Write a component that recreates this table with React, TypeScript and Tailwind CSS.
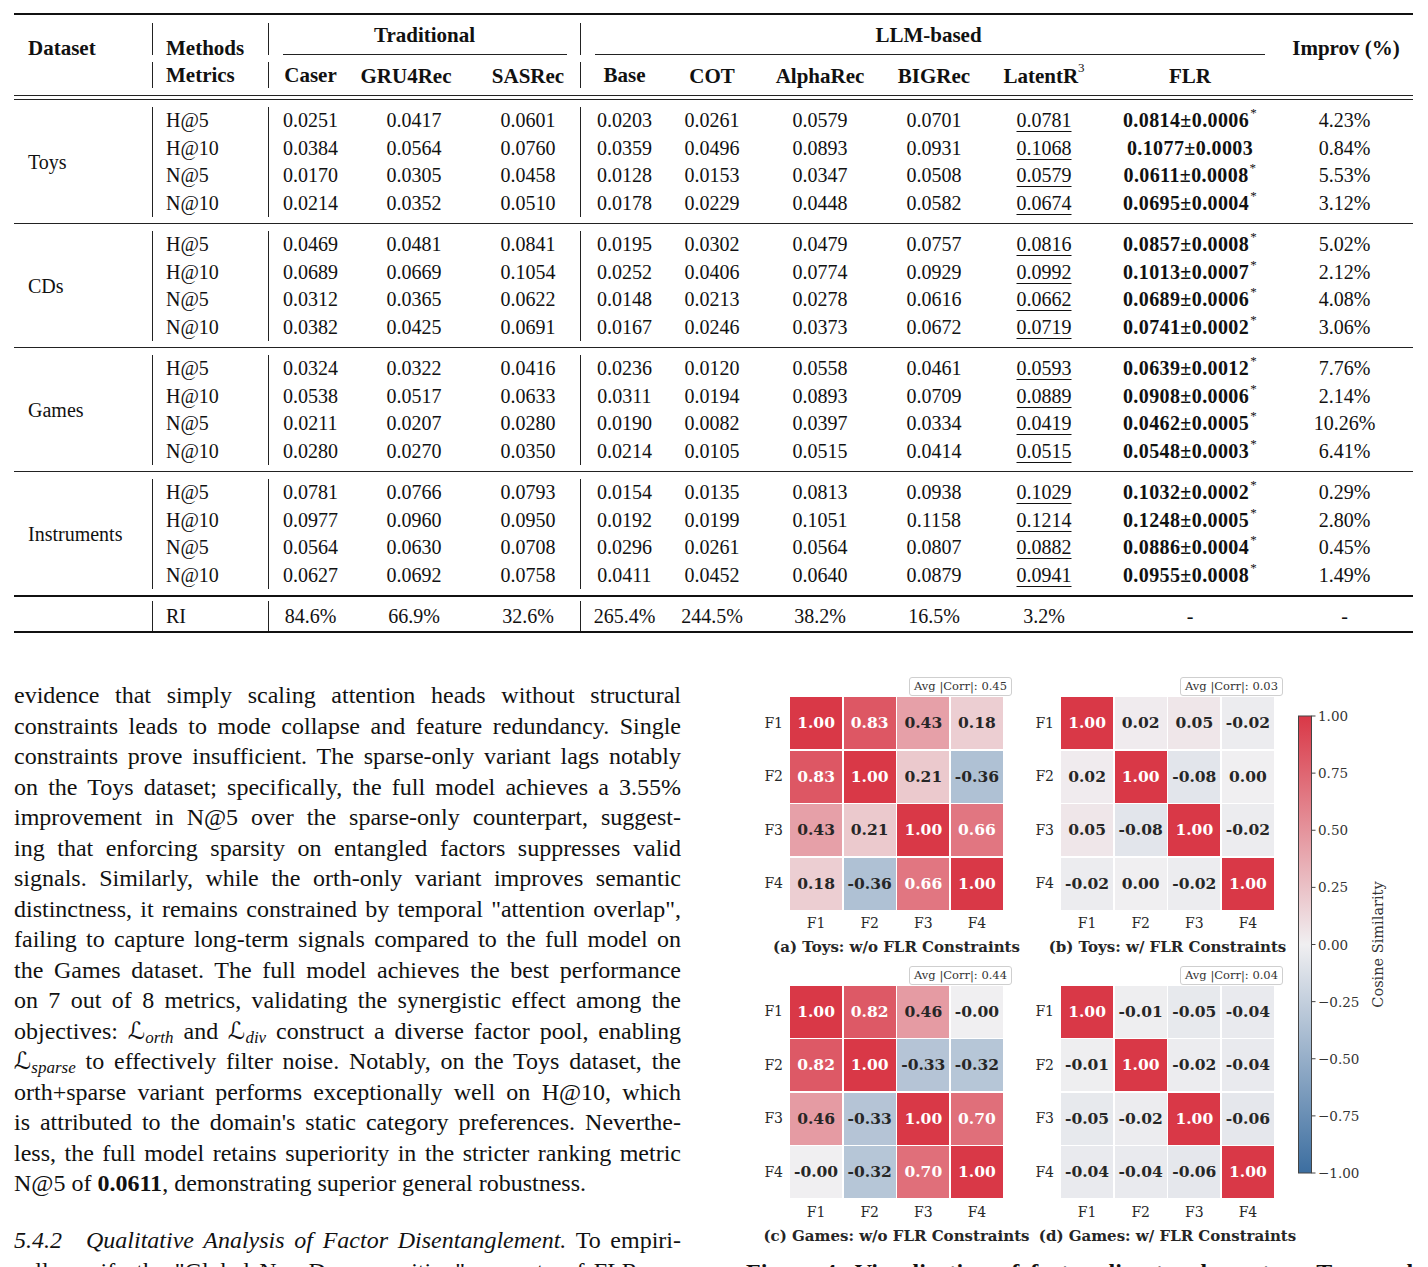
const COLS =
  'grid grid-cols-[138px_116px_84px_124px_104px_88px_88px_128px_100px_120px_172px_137px]'

const groups = [
  {
    name: 'Toys',
    rows: [
      ['H@5', '0.0251', '0.0417', '0.0601', '0.0203', '0.0261', '0.0579', '0.0701', '0.0781', '0.0814±0.0006*', '4.23%'],
      ['H@10', '0.0384', '0.0564', '0.0760', '0.0359', '0.0496', '0.0893', '0.0931', '0.1068', '0.1077±0.0003', '0.84%'],
      ['N@5', '0.0170', '0.0305', '0.0458', '0.0128', '0.0153', '0.0347', '0.0508', '0.0579', '0.0611±0.0008*', '5.53%'],
      ['N@10', '0.0214', '0.0352', '0.0510', '0.0178', '0.0229', '0.0448', '0.0582', '0.0674', '0.0695±0.0004*', '3.12%'],
    ],
  },
  {
    name: 'CDs',
    rows: [
      ['H@5', '0.0469', '0.0481', '0.0841', '0.0195', '0.0302', '0.0479', '0.0757', '0.0816', '0.0857±0.0008*', '5.02%'],
      ['H@10', '0.0689', '0.0669', '0.1054', '0.0252', '0.0406', '0.0774', '0.0929', '0.0992', '0.1013±0.0007*', '2.12%'],
      ['N@5', '0.0312', '0.0365', '0.0622', '0.0148', '0.0213', '0.0278', '0.0616', '0.0662', '0.0689±0.0006*', '4.08%'],
      ['N@10', '0.0382', '0.0425', '0.0691', '0.0167', '0.0246', '0.0373', '0.0672', '0.0719', '0.0741±0.0002*', '3.06%'],
    ],
  },
  {
    name: 'Games',
    rows: [
      ['H@5', '0.0324', '0.0322', '0.0416', '0.0236', '0.0120', '0.0558', '0.0461', '0.0593', '0.0639±0.0012*', '7.76%'],
      ['H@10', '0.0538', '0.0517', '0.0633', '0.0311', '0.0194', '0.0893', '0.0709', '0.0889', '0.0908±0.0006*', '2.14%'],
      ['N@5', '0.0211', '0.0207', '0.0280', '0.0190', '0.0082', '0.0397', '0.0334', '0.0419', '0.0462±0.0005*', '10.26%'],
      ['N@10', '0.0280', '0.0270', '0.0350', '0.0214', '0.0105', '0.0515', '0.0414', '0.0515', '0.0548±0.0003*', '6.41%'],
    ],
  },
  {
    name: 'Instruments',
    rows: [
      ['H@5', '0.0781', '0.0766', '0.0793', '0.0154', '0.0135', '0.0813', '0.0938', '0.1029', '0.1032±0.0002*', '0.29%'],
      ['H@10', '0.0977', '0.0960', '0.0950', '0.0192', '0.0199', '0.1051', '0.1158', '0.1214', '0.1248±0.0005*', '2.80%'],
      ['N@5', '0.0564', '0.0630', '0.0708', '0.0296', '0.0261', '0.0564', '0.0807', '0.0882', '0.0886±0.0004*', '0.45%'],
      ['N@10', '0.0627', '0.0692', '0.0758', '0.0411', '0.0452', '0.0640', '0.0879', '0.0941', '0.0955±0.0008*', '1.49%'],
    ],
  },
]

const riRow = ['RI', '84.6%', '66.9%', '32.6%', '265.4%', '244.5%', '38.2%', '16.5%', '3.2%', '-', '-']

// one class per value column: Caser .. Improv
const cellCls = [
  'border-l border-[#222] flex items-center justify-center',
  'flex items-center justify-center',
  'flex items-center justify-center',
  'border-l border-[#222] flex items-center justify-center',
  'flex items-center justify-center',
  'flex items-center justify-center',
  'flex items-center justify-center',
  'flex items-center justify-center underline underline-offset-[4px] decoration-1',
  'flex items-center justify-center font-bold tracking-[0.4px]',
  'flex items-center justify-center',
]

function FlrValue({ v }: { v: string }) {
  if (!v.endsWith('*')) return <>{v}</>
  return (
    <>
      {v.slice(0, -1)}
      <sup className="font-normal text-[13px] top-[-0.55em] ml-[1px]">*</sup>
    </>
  )
}

function Header() {
  return (
    <div className="border-t-2 border-[#111]">
      <div className={COLS + ' h-[45px] font-bold text-[21px]'}>
        <div className="pl-[14px] flex items-end">
          <span className="leading-[26px] mb-[-1px]">Dataset</span>
        </div>
        <div className="pt-[8px] pb-[5px]">
          <div className="h-full border-l border-[#222] pl-[13px] flex items-end">
            <span className="leading-[26px] mb-[-6px]">Methods</span>
          </div>
        </div>
        <div className="col-span-3 pt-[8px] pb-[5px]">
          <div className="h-full border-l border-[#222] flex flex-col">
            <div className="leading-[24px] text-center">Traditional</div>
            <div className="mt-[7px] ml-[14px] mr-[13px] h-px bg-[#222]" />
          </div>
        </div>
        <div className="col-span-6 pt-[8px] pb-[5px]">
          <div className="h-full border-l border-[#222] flex flex-col">
            <div className="leading-[24px] text-center">LLM-based</div>
            <div className="mt-[7px] ml-[14px] mr-[11px] h-px bg-[#222]" />
          </div>
        </div>
        <div className="flex items-end justify-center">
          <span className="leading-[26px] mb-[-1px] pl-[3px]">Improv (%)</span>
        </div>
      </div>
      <div className={COLS + ' h-[30px] font-bold text-[21px] leading-[26px]'}>
        <div />
        <div className="pt-[2px] pb-[3px]">
          <div className="h-full border-l border-[#222] pl-[13px] flex items-center">Metrics</div>
        </div>
        <div className="pt-[2px] pb-[3px]">
          <div className="h-full border-l border-[#222] flex items-center justify-center">Caser</div>
        </div>
        <div className="flex items-center justify-center pr-[16px]">GRU4Rec</div>
        <div className="flex items-center justify-center">SASRec</div>
        <div className="pt-[2px] pb-[3px]">
          <div className="h-full border-l border-[#222] flex items-center justify-center">Base</div>
        </div>
        <div className="flex items-center justify-center">COT</div>
        <div className="flex items-center justify-center">AlphaRec</div>
        <div className="flex items-center justify-center">BIGRec</div>
        <div className="flex items-center justify-center">
          <span>
            LatentR<sup className="text-[13px] font-normal top-[-0.8em]">3</sup>
          </span>
        </div>
        <div className="flex items-center justify-center">FLR</div>
        <div />
      </div>
      <div className="mt-[5px] h-[5px] border-y border-[#222]" />
    </div>
  )
}

function Group({ name, rows, first }: { name: string; rows: string[][]; first: boolean }) {
  return (
    <div className={first ? 'py-[6.5px]' : 'py-[6.5px] border-t border-[#222]'}>
      <div className={COLS + ' grid-rows-[repeat(4,27.5px)] text-[20px]'}>
        <div className="row-span-4 pl-[14px] flex items-center">{name}</div>
        {rows.map((r) => (
          <Row key={r[0]} r={r} />
        ))}
      </div>
    </div>
  )
}

function Row({ r }: { r: string[] }) {
  const [metric, ...rest] = r
  return (
    <>
      <div className="border-l border-[#222] pl-[13px] flex items-center">{metric}</div>
      {rest.map((v, i) => (
        <div key={i} className={cellCls[i]}>
          {i === 8 ? <FlrValue v={v} /> : v}
        </div>
      ))}
    </>
  )
}

function RiRow() {
  const [label, ...rest] = riRow
  return (
    <div className={COLS + ' h-[38px] border-t-2 border-b-2 border-[#111] text-[20px]'}>
      <div />
      <div className="py-[4px]">
        <div className="h-full border-l border-[#222] pl-[13px] flex items-center">{label}</div>
      </div>
      {rest.map((v, i) =>
        i === 0 || i === 3 ? (
          <div key={i} className="py-[4px]">
            <div className="h-full border-l border-[#222] flex items-center justify-center">{v}</div>
          </div>
        ) : (
          <div key={i} className="flex items-center justify-center">
            {v}
          </div>
        ),
      )}
    </div>
  )
}

const RED = [217, 56, 71]
const MID = [240, 239, 241]
const BLUE = [60, 110, 160]

function cellColor(s: string) {
  const v = parseFloat(s)
  const end = v >= 0 ? RED : BLUE
  const t = Math.min(Math.abs(v), 1)
  const c = MID.map((m, i) => Math.round(m + (end[i] - m) * t))
  return `rgb(${c.join(',')})`
}

const heatmaps = [
  {
    avg: '0.45',
    caption: '(a) Toys: w/o FLR Constraints',
    data: [
      ['1.00', '0.83', '0.43', '0.18'],
      ['0.83', '1.00', '0.21', '-0.36'],
      ['0.43', '0.21', '1.00', '0.66'],
      ['0.18', '-0.36', '0.66', '1.00'],
    ],
  },
  {
    avg: '0.03',
    caption: '(b) Toys: w/ FLR Constraints',
    data: [
      ['1.00', '0.02', '0.05', '-0.02'],
      ['0.02', '1.00', '-0.08', '0.00'],
      ['0.05', '-0.08', '1.00', '-0.02'],
      ['-0.02', '0.00', '-0.02', '1.00'],
    ],
  },
  {
    avg: '0.44',
    caption: '(c) Games: w/o FLR Constraints',
    data: [
      ['1.00', '0.82', '0.46', '-0.00'],
      ['0.82', '1.00', '-0.33', '-0.32'],
      ['0.46', '-0.33', '1.00', '0.70'],
      ['-0.00', '-0.32', '0.70', '1.00'],
    ],
  },
  {
    avg: '0.04',
    caption: '(d) Games: w/ FLR Constraints',
    data: [
      ['1.00', '-0.01', '-0.05', '-0.04'],
      ['-0.01', '1.00', '-0.02', '-0.04'],
      ['-0.05', '-0.02', '1.00', '-0.06'],
      ['-0.04', '-0.04', '-0.06', '1.00'],
    ],
  },
]

const factors = ['F1', 'F2', 'F3', 'F4']

function Heatmap({ avg, caption, data }: { avg: string; caption: string; data: string[][] }) {
  return (
    <div className="w-[243px] flex flex-col font-['DejaVu_Serif',serif] text-[#262626]">
      <div className="h-[20px] flex justify-end mr-[-9px]">
        <div className="h-[19px] px-[4px] border border-[#cfcfcf] rounded-[3px] bg-white text-[11.5px] leading-[17px] text-[#333]">
          Avg |Corr|: {avg}
        </div>
      </div>
      <div className="flex">
        <div className="w-[30px] pr-[7px] grid grid-rows-4 gap-[1.5px] text-[14px]">
          {factors.map((f) => (
            <div key={f} className="flex items-center justify-end">
              {f}
            </div>
          ))}
        </div>
        <div className="w-[213px] grid grid-cols-4 gap-[1.5px] bg-white">
          {data.flat().map((v, i) => (
            <div
              key={i}
              className="h-[52px] flex items-center justify-center font-bold text-[15.5px]"
              style={{ backgroundColor: cellColor(v), color: parseFloat(v) >= 0.6 ? '#ffffff' : '#262626' }}
            >
              {v}
            </div>
          ))}
        </div>
      </div>
      <div className="ml-[30px] w-[213px] h-[28px] grid grid-cols-4 gap-[1.5px] text-[14px]">
        {factors.map((f) => (
          <div key={f} className="flex items-center justify-center">
            {f}
          </div>
        ))}
      </div>
      <div className="ml-[30px] w-[213px] h-[20px] flex items-center justify-center whitespace-nowrap font-bold text-[15px]">
        {caption}
      </div>
    </div>
  )
}

const ticks = ['1.00', '0.75', '0.50', '0.25', '0.00', '−0.25', '−0.50', '−0.75', '−1.00']

function Colorbar() {
  const top = 8
  const h = 457
  return (
    <svg width="110" height="480" className="mt-[31px] ml-[24px] shrink-0" fontFamily="'DejaVu Serif', serif">
      <defs>
        <linearGradient id="cb" x1="0" y1="0" x2="0" y2="1">
          <stop offset="0" stopColor="#d93847" />
          <stop offset="0.5" stopColor="#f0eff1" />
          <stop offset="1" stopColor="#3c6ea0" />
        </linearGradient>
      </defs>
      <rect x="0.5" y={top} width="13" height={h} fill="url(#cb)" stroke="#444" strokeWidth="1" />
      {ticks.map((t, i) => {
        const y = top + (h * i) / 8
        return (
          <g key={t}>
            <line x1="13.5" x2="17.5" y1={y} y2={y} stroke="#444" strokeWidth="1" />
            <text x="20" y={y} dominantBaseline="central" fontSize="13.5" fill="#333">
              {t}
            </text>
          </g>
        )
      })}
      <text
        x="80"
        y={top + h / 2}
        fontSize="14.5"
        fill="#333"
        textAnchor="middle"
        dominantBaseline="central"
        transform={`rotate(-90 80 ${top + h / 2})`}
      >
        Cosine Similarity
      </text>
    </svg>
  )
}

function L({ sub }: { sub: string }) {
  return (
    <span>
      <span className="font-['DejaVu_Sans',sans-serif]">ℒ</span>
      <sub className="italic text-[17px]">{sub}</sub>
    </span>
  )
}

const justified = 'text-justify [text-align-last:justify]'

export default function App() {
  const lines = [
    'evidence that simply scaling attention heads without structural',
    'constraints leads to mode collapse and feature redundancy. Single',
    'constraints prove insufficient. The sparse-only variant lags notably',
    'on the Toys dataset; specifically, the full model achieves a 3.55%',
    'improvement in N@5 over the sparse-only counterpart, suggest-',
    'ing that enforcing sparsity on entangled factors suppresses valid',
    'signals. Similarly, while the orth-only variant improves semantic',
    'distinctness, it remains constrained by temporal "attention overlap",',
    'failing to capture long-term signals compared to the full model on',
    'the Games dataset. The full model achieves the best performance',
    'on 7 out of 8 metrics, validating the synergistic effect among the',
  ]
  const lines2 = [
    'orth+sparse variant performs exceptionally well on H@10, which',
    "is attributed to the domain's static category preferences. Neverthe-",
    'less, the full model retains superiority in the stricter ranking metric',
  ]

  return (
    <div className="w-[1428px] h-[1267px] overflow-hidden bg-white text-[#111] font-['Liberation_Serif','DejaVu_Serif',serif] pt-[13px]">
      <div className="ml-[14px] w-[1399px]">
        <Header />
        {groups.map((g, i) => (
          <Group key={g.name} name={g.name} rows={g.rows} first={i === 0} />
        ))}
        <RiRow />
      </div>

      <div className="mt-[44px] ml-[14px] flex gap-[65px]">
        <div className="w-[667px] pt-[3px] text-[24px] leading-[30.5px]">
          {lines.map((l) => (
            <div key={l} className={justified}>
              {l}
            </div>
          ))}
          <div className={justified}>
            objectives: <L sub="orth" /> and <L sub="div" /> construct a diverse factor pool, enabling
          </div>
          <div className={justified}>
            <L sub="sparse" /> to effectively filter noise. Notably, on the Toys dataset, the
          </div>
          {lines2.map((l) => (
            <div key={l} className={justified}>
              {l}
            </div>
          ))}
          <div>
            N@5 of <span className="font-bold">0.0611</span>, demonstrating superior general robustness.
          </div>
          <div className={'mt-[26.5px] ' + justified}>
            <span className="italic">5.4.2</span>
            <span className="inline-block w-[24px]" />
            <span className="italic">Qualitative Analysis of Factor Disentanglement.</span> To empiri-
          </div>
          <div className={justified}>cally verify the "Global Non-Decomposition" property of FLR, we</div>
        </div>

        <div className="w-[667px] flex flex-col">
          <div className="flex pl-[14px]">
            <div className="grid grid-cols-[243px_243px] gap-x-[28px] gap-y-[8px]">
              {heatmaps.map((h) => (
                <Heatmap key={h.caption} avg={h.avg} caption={h.caption} data={h.data} />
              ))}
            </div>
            <Colorbar />
          </div>
          <div className={'mt-[11px] text-[24px] leading-[30px] font-bold ' + justified}>
            Figure 4: Visualization of factor disentanglement on Toys and
          </div>
        </div>
      </div>
    </div>
  )
}
